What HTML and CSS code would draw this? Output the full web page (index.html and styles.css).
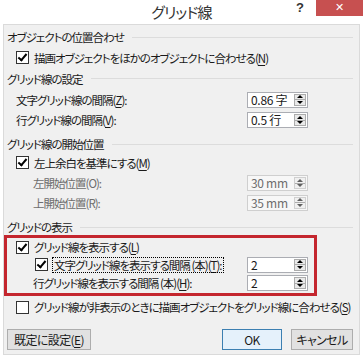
FILE: index.html
```html
<!DOCTYPE html>
<html lang="ja">

<head>
    <meta charset="UTF-8">
    <title>グリッド線</title>
    <link rel="stylesheet" href="styles.css">
</head>

<body>
    <div class="titlebar">
        <span></span>
        <span class="title">グリッド線</span>
        <div class="controls">
            <span class="help">?</span>
            <span class="close">✕</span>
        </div>
    </div>

    <div class="panel">
        <div class="heading"><span>オブジェクトの位置合わせ</span></div>
        <div class="row row-check h21">
            <span class="box checked"></span>
            <span>描画オブジェクトをほかのオブジェクトに合わせる(<u>N</u>)</span>
        </div>

        <div class="heading h21"><span>グリッド線の設定</span></div>
        <div class="row row-field h21">
            <span>文字グリッド線の間隔(<u>Z</u>):</span>
            <div class="spin"><span class="val">0.86 字</span><span class="arrows"><i class="up"></i><i class="down"></i></span></div>
        </div>
        <div class="row row-field h20">
            <span>行グリッド線の間隔(<u>V</u>):</span>
            <div class="spin"><span class="val">0.5 行</span><span class="arrows"><i class="up"></i><i class="down"></i></span></div>
        </div>

        <div class="heading gap4"><span>グリッド線の開始位置</span></div>
        <div class="row row-check h17">
            <span class="box checked"></span>
            <span>左上余白を基準にする(<u>M</u>)</span>
        </div>
        <div class="row row-field sub disabled gap2">
            <span>左開始位置(O):</span>
            <div class="spin"><span class="val">30 mm</span><span class="arrows"><i class="up"></i><i class="down"></i></span></div>
        </div>
        <div class="row row-field sub disabled h19">
            <span>上開始位置(R):</span>
            <div class="spin"><span class="val">35 mm</span><span class="arrows"><i class="up"></i><i class="down"></i></span></div>
        </div>

        <div class="heading gap5"><span>グリッドの表示</span></div>
        <div class="mark">
            <div class="row row-check h18">
                <span class="box checked"></span>
                <span>グリッド線を表示する(<u>L</u>)</span>
            </div>
            <div class="row row-field h17">
                <div class="inner-check">
                    <span class="box checked"></span>
                    <span class="focus">文字グリッド線を表示する間隔 (本)(<u>T</u>):</span>
                </div>
                <div class="spin"><span class="val">2</span><span class="arrows"><i class="up"></i><i class="down"></i></span></div>
            </div>
            <div class="row row-field sub">
                <span>行グリッド線を表示する間隔 (本)(<u>H</u>):</span>
                <div class="spin"><span class="val">2</span><span class="arrows"><i class="up"></i><i class="down"></i></span></div>
            </div>
        </div>
        <div class="row row-check gap1">
            <span class="box"></span>
            <span>グリッド線が非表示のときに描画オブジェクトをグリッド線に合わせる(<u>S</u>)</span>
        </div>

        <div class="buttons">
            <button class="btn btn-default">既定に設定(<u>E</u>)</button>
            <span class="spacer"></span>
            <button class="btn btn-ok">OK</button>
            <button class="btn btn-cancel">キャンセル</button>
        </div>
    </div>
</body>

</html>
```

FILE: styles.css
```css
body {
    margin: 0;
    width: 363px;
    height: 360px;
    background: #fff;
    font-family: "Noto Sans CJK JP", "Noto Sans", sans-serif;
    font-size: 11.5px;
    letter-spacing: -1px;
    font-feature-settings: "palt";
    color: #1a1a1a;
    overflow: hidden;
}

u {
    text-decoration-thickness: 1px;
    text-underline-offset: 2px;
}

/* title bar */
.titlebar {
    height: 24px;
    display: grid;
    grid-template-columns: 1fr auto 1fr;
}

.title {
    font-size: 15px;
    line-height: 24px;
    color: #333;
    letter-spacing: -0.8px;
}

.controls {
    display: flex;
    justify-content: flex-end;
    align-items: flex-start;
}

.help {
    font-family: "Liberation Sans", sans-serif;
    font-weight: bold;
    font-size: 13px;
    line-height: 15px;
    color: #333;
    margin-right: 12px;
    letter-spacing: 0;
}

.close {
    width: 47px;
    height: 16px;
    background: #c75050;
    color: #fff;
    font-family: "DejaVu Sans", sans-serif;
    font-size: 11px;
    font-weight: bold;
    line-height: 16px;
    text-align: center;
    letter-spacing: 0;
}

/* dialog body */
.panel {
    margin: 0 3px;
    height: 331px;
    border: 1px solid #dadada;
    background: #f0f0f0;
    padding-top: 2px;
    box-sizing: border-box;
}

.heading {
    height: 20px;
    display: flex;
    align-items: center;
    padding-left: 3px;
    margin-right: 6px;
}

.heading::after {
    content: "";
    flex: 1;
    height: 1px;
    background: #dcdcdc;
    margin-left: 8px;
}

.row {
    height: 20px;
    display: flex;
    align-items: center;
    white-space: nowrap;
}

.row-check {
    padding-left: 12px;
}

.row-field {
    padding-left: 12px;
    justify-content: space-between;
    width: 304px;
    box-sizing: border-box;
}

.row-field.sub {
    padding-left: 29px;
}

.h17 { height: 17px; }
.h18 { height: 18px; }
.h19 { height: 19px; }
.h20 { height: 20px; }
.h21 { height: 21px; }
.gap1 { margin-top: 1px; }
.gap2 { margin-top: 2px; }
.gap4 { margin-top: 4px; }
.gap5 { margin-top: 5px; }

.disabled {
    color: #6d6d6d;
}

.box {
    width: 11px;
    height: 11px;
    border: 1px solid #333;
    background: #fff;
    margin-right: 5px;
    flex: none;
    position: relative;
}

.box.checked::after {
    content: "";
    position: absolute;
    left: 3px;
    top: 0;
    width: 3px;
    height: 7px;
    border: solid #000;
    border-width: 0 2px 2px 0;
    transform: rotate(40deg);
}

.inner-check {
    display: flex;
    align-items: center;
    padding-left: 19px;
}

.focus {
    outline: 1px dotted #000;
    outline-offset: 0;
    padding: 0 1px;
    line-height: 14px;
}

/* spin box */
.spin {
    width: 61px;
    height: 16px;
    box-sizing: border-box;
    border: 1px solid #abadb3;
    background: #fff;
    display: flex;
    align-items: center;
    justify-content: space-between;
    padding: 0 1px 0 3px;
}

.disabled .spin {
    border-color: #cfcfcf;
    background: #f7f7f7;
}

.val {
    font-size: 12px;
    line-height: 14px;
    letter-spacing: -0.3px;
}

.arrows {
    width: 12px;
    height: 12px;
    display: flex;
    flex-direction: column;
    border: 1px solid #acacac;
    background: #e9e9e9;
    box-sizing: border-box;
}

.disabled .arrows {
    border-color: #d0d0d0;
    background: #f0f0f0;
}

.arrows i {
    flex: 1;
    display: flex;
    align-items: center;
    justify-content: center;
}

.arrows i.up {
    border-bottom: 1px solid #acacac;
}

.arrows i::after {
    content: "";
    border-left: 3px solid transparent;
    border-right: 3px solid transparent;
}

.arrows i.up::after {
    border-bottom: 3px solid #000;
}

.arrows i.down::after {
    border-top: 3px solid #000;
}

.disabled .arrows i::after {
    opacity: 0.6;
}

/* red highlight */
.mark {
    margin-top: -2px;
    width: 313px;
    height: 61px;
    box-sizing: border-box;
    border: 3px solid #c4262e;
}

.mark .row-check {
    padding-left: 9px;
}

.mark .row-field {
    padding-left: 9px;
    width: 301px;
}

.mark .inner-check {
    padding-left: 19px;
}

.mark .row-field.sub {
    padding-left: 26px;
}

/* buttons */
.buttons {
    display: flex;
    margin-top: 12px;
    padding: 0 6px 0 3px;
    gap: 9px;
}

.spacer {
    flex: 1;
}

.btn {
    height: 21px;
    font-family: inherit;
    font-size: 12px;
    letter-spacing: -0.6px;
    font-feature-settings: "palt";
    color: #1a1a1a;
    background: #e1e1e1;
    border: 1px solid #adadad;
    padding: 0;
}

.btn-default { width: 84px; }
.btn-ok { width: 60px; border-color: #3c7fb1; background: #e5f1fb; }
.btn-cancel { width: 62px; }
```
